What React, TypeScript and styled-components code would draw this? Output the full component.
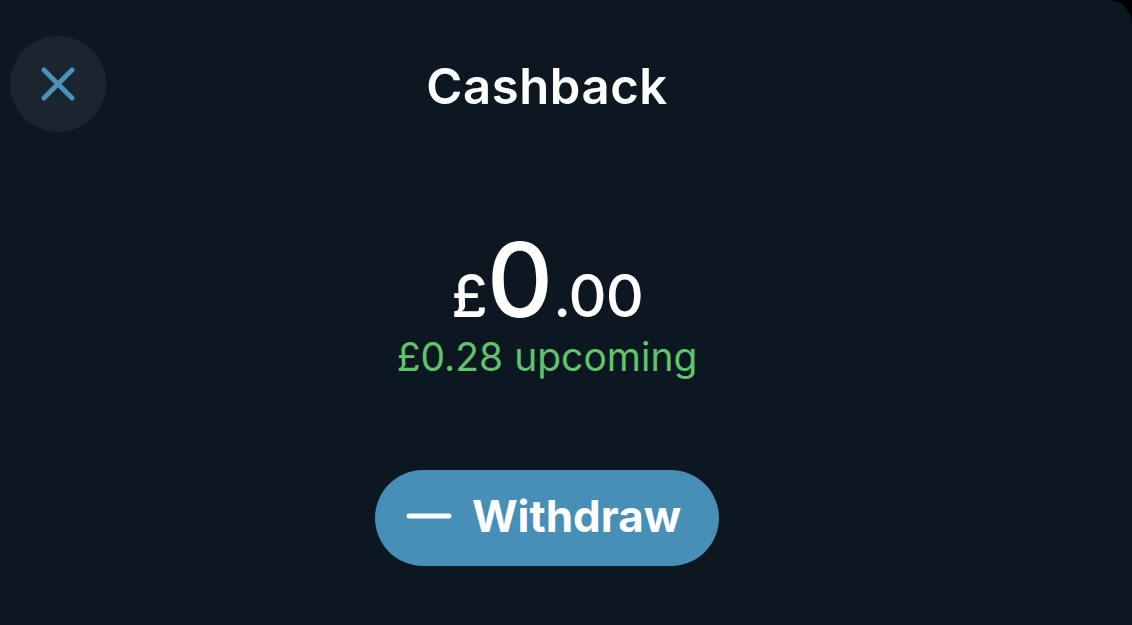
import React from "react";
import styled, { createGlobalStyle } from "styled-components";

const Global = createGlobalStyle`
  html, body {
    margin: 0;
    padding: 0;
    background: #000;
    font-family: "Inter", "Liberation Sans", sans-serif;
  }
`

const Sheet = styled.div`
  width: 1132px;
  height: 625px;
  box-sizing: border-box;
  background: #0d1721;
  border-top-right-radius: 24px;
  padding: 36px 38px 0 0;
  display: flex;
  flex-direction: column;
  align-items: stretch;
  overflow: hidden;
`
const Header = styled.header`
  display: grid;
  grid-template-columns: 96px 1fr 96px;
  align-items: center;
  padding: 0 10px;
`
const CloseButton = styled.button`
  width: 96px;
  height: 96px;
  border-radius: 50%;
  border: none;
  padding: 0;
  background: #1b2530;
  display: flex;
  align-items: center;
  justify-content: center;
  cursor: pointer;
`
const Title = styled.h1`
  margin: 0;
  text-align: center;
  color: #fff;
  font-size: 49px;
  font-weight: 600;
  letter-spacing: 0.6px;
  line-height: 1;
  padding-top: 4px;
`
const Balance = styled.section`
  display: flex;
  flex-direction: column;
  align-items: center;
  margin-top: 96px;
`
const Amount = styled.div`
  color: #fff;
  display: flex;
  align-items: baseline;
  line-height: 1;
`
const Part = styled.span<{ $big?: boolean }>`
  font-size: ${(p) => (p.$big ? "103px" : "59px")};
  font-weight: 500;
  letter-spacing: ${(p) => (p.$big ? "0" : "-1px")};
`
const Upcoming = styled.div`
  color: #5fc46b;
  font-size: 39px;
  margin-top: 2px;
`
const Actions = styled.div`
  display: flex;
  justify-content: center;
  margin-top: 90px;
`
const Withdraw = styled.button`
  height: 96px;
  width: 344px;
  border-radius: 48px;
  border: none;
  background: #478fb7;
  color: #fff;
  font-family: "Inter", "Liberation Sans", sans-serif;
  font-size: 44px;
  font-weight: 700;
  display: flex;
  align-items: center;
  justify-content: center;
  gap: 20px;
  padding: 0 7px 4px 0;
`

export default function App() {
  return (
    <>
      <Global />
      <Sheet>
        <Header>
          <CloseButton aria-label="Close">
            <svg width="34" height="34" viewBox="0 0 34 34">
              <path d="M3 3 L31 31 M31 3 L3 31" stroke="#4a91ba" strokeWidth="5" strokeLinecap="round" />
            </svg>
          </CloseButton>
          <Title>Cashback</Title>
          <span />
        </Header>
        <Balance>
          <Amount>
            <Part>£</Part>
            <Part $big>0</Part>
            <Part>.00</Part>
          </Amount>
          <Upcoming>£0.28 upcoming</Upcoming>
        </Balance>
        <Actions>
          <Withdraw>
            <svg width="46" height="6" viewBox="0 0 46 6">
              <path d="M3 3 H43" stroke="#fff" strokeWidth="5" strokeLinecap="round" />
            </svg>
            Withdraw
          </Withdraw>
        </Actions>
      </Sheet>
    </>
  );
}
